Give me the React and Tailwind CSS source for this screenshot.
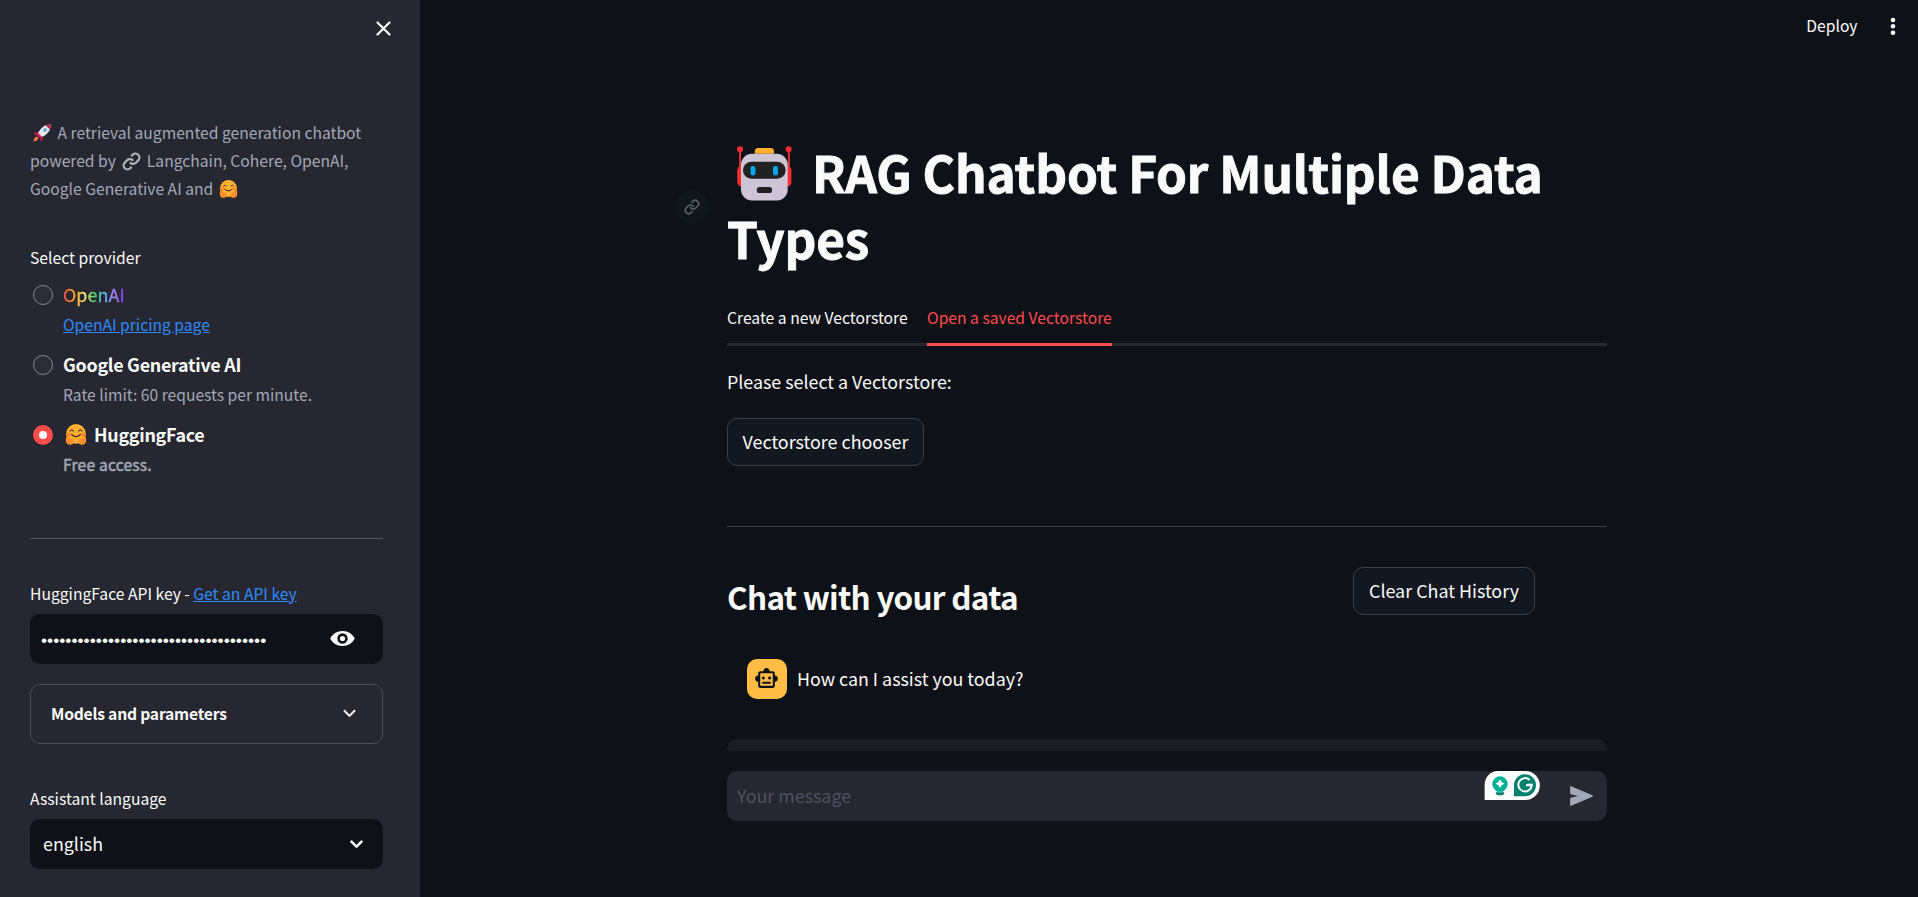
import React from "react";

const Rocket = ({ className }) => (
  <svg viewBox="0 0 18 18" className={className}>
    <path d="M5.5 8 2 8.6 1 11l4-.6zM10 12.5 9.4 16 7 17l.6-4z" fill="#c4134f" />
    <path d="M17.6.4C12 .2 8 3 5 9.2L8.8 13C15 10 17.8 6 17.6.4z" fill="#e9e6ee" />
    <path d="M17.6.4 12.6 1.2l4.2 4.2z" fill="#d1174f" />
    <path d="M5 9.2 8.8 13l-2 1.2-3-3z" fill="#d1174f" />
    <path d="M4 12.6c-2 .3-2.800 2-3.600 5 3-.8 4.700-1.600 5-3.600z" fill="#ff7d3c" />
    <circle cx="12" cy="6" r="1.900" fill="#6aa9dc" />
  </svg>
);

const ChainLink = ({ className }) => (
  <svg viewBox="0 0 24 24" fill="none" stroke="#b4b4b8" strokeWidth="2.800" className={className}>
    <path d="M10 13a5 5 0 0 0 7.540.540l3-3a5 5 0 0 0-7.070-7.070l-1.720 1.710" />
    <path d="M14 11a5 5 0 0 0-7.540-.540l-3 3a5 5 0 0 0 7.070 7.070l1.710-1.710" />
  </svg>
);

const Hug = ({ className }) => (
  <svg viewBox="0 0 20 19" className={className}>
    <ellipse cx="10" cy="9" rx="9" ry="9" fill="#ffb02e" />
    <circle cx="3.200" cy="9.500" r="1.800" fill="#ff822d" />
    <circle cx="16.800" cy="9.500" r="1.800" fill="#ff822d" />
    <path d="M4.600 6.400q1.500-2.400 3 0M12.400 6.400q1.500-2.400 3 0" fill="none" stroke="#402a32" strokeWidth="1" strokeLinecap="round" />
    <path d="M6 9.500q4 4 8 0" fill="none" stroke="#402a32" strokeWidth="1.100" strokeLinecap="round" />
    <path d="M.8 12.500q1-1.600 2.600-.6l3.400 1.700q1.700 1.200 1 3.600-.6 1.600-2.600 1.600H3.600Q.4 18.400.8 12.500z" fill="#ff8f2d" />
    <path d="M19.200 12.500q-1-1.600-2.600-.6l-3.400 1.700q-1.700 1.200-1 3.600.6 1.600 2.600 1.600h1.600q3.200-.4 2.800-6.300z" fill="#ff8f2d" />
  </svg>
);

const Robot = ({ className }) => (
  <svg viewBox="0 0 55 55" className={className}>
    <path d="M2.200 4h1.800v20H2.200zM51 4h1.800v20H51z" fill="#f92f2f" />
    <circle cx="3.100" cy="3.200" r="3" fill="#f92f2f" />
    <circle cx="51.600" cy="3.200" r="3" fill="#f92f2f" />
    <path d="M5 20C2 20 .3 22 .3 24v12c0 2.500 1.700 4.500 4.700 4.500zM49.700 20c3 0 4.700 2 4.700 4v12c0 2.500-1.700 4.500-4.700 4.500z" fill="#f92f2f" />
    <rect x="4" y="7.700" width="46.700" height="46.700" rx="11" fill="#cdc4d6" />
    <path d="M17.800 7.700V5.300c0-1.900 1.200-3.200 3-3.200h13.200c1.800 0 3 1.300 3 3.200v2.400z" fill="#ffb02e" />
    <rect x="6" y="15.800" width="42.600" height="17" rx="8.500" fill="#212121" />
    <rect x="13.500" y="20" width="5" height="9.500" rx="2.200" fill="#00a6ed" />
    <rect x="36" y="20" width="5" height="9.500" rx="2.200" fill="#00a6ed" />
    <rect x="19.800" y="41" width="15.200" height="6" rx="2.600" fill="#212121" />
  </svg>
);

const T = ({ className = "", children }) => (
  <span className={"whitespace-pre " + className}>{children}</span>
);

function Radio({ checked, label, caption }) {
  return (
    <div className="flex h-[70px] gap-[10px] pl-[3px]">
      <div className={checked ? "mt-[4px] flex size-[20px] shrink-0 items-center justify-center rounded-full bg-[#ff4b4b]" : "mt-[4px] size-[20px] shrink-0 rounded-full border border-[#85868c] bg-[#2b2c36]"}>
        {checked && <div className="size-[7.500px] rounded-full bg-[#fafafa]" />}
      </div>
      <div>
        <div className="-mt-px flex h-[28px] items-center text-[17.900px] leading-[28px]">{label}</div>
        <div className="mt-px flex h-[28px] items-center pt-[3px] text-[15.650px] leading-[28px] text-[#a3a8b8]">{caption}</div>
      </div>
    </div>
  );
}

export default function App() {
  return (
    <div className="flex h-[897px] w-full overflow-hidden bg-[#0e1117] font-['Noto_Sans_CJK_SC',sans-serif] text-[#fafafa]">
      <aside className="flex w-[420px] shrink-0 flex-col bg-[#262730] pr-[37px] pl-[30px]">
        <div className="-mr-[8px] flex h-[119px] justify-end pt-[21px]">
          <svg viewBox="0 0 15 15" className="size-[15px]" stroke="#fafafa" strokeWidth="2.200" strokeLinecap="round">
            <path d="M1.500 1.500 13.500 13.500M13.500 1.500 1.500 13.500" />
          </svg>
        </div>
        <div className="flex flex-col text-[15.670px] leading-[28px] text-[#a3a8b8]">
          <div className="flex items-center"><Rocket className="mr-[6.500px] ml-[3px] size-[18px]" /><T>A retrieval augmented generation chatbot</T></div>
          <div className="flex items-center"><T>powered by</T><ChainLink className="mr-[6px] ml-[6px] size-[19px]" /><T>Langchain, Cohere, OpenAI,</T></div>
          <div className="flex items-center"><T>Google Generative AI and</T><Hug className="ml-[6px] h-[18px] w-[19px]" /></div>
        </div>
        <div className="mt-[41px] text-[15.700px] leading-[28px]"><T>Select provider</T></div>
        <div className="mt-[9px]">
          <Radio
            label={<T className="bg-[linear-gradient(to_right,#ff4b4b,#ffa421_18%,#ffe870_34%,#3dd56d_52%,#60b4ff_68%,#a97eff_84%,#803df5)] bg-clip-text tracking-[0.100px] text-transparent [-webkit-text-stroke:0.300px_transparent]">OpenAI</T>}
            caption={<T className="text-[#2b8cff] underline">OpenAI pricing page</T>}
          />
          <Radio label={<T className="font-bold tracking-[-0.270px]">Google Generative AI</T>} caption={<T>Rate limit: 60 requests per minute.</T>} />
          <Radio checked label={<><Hug className="mr-[7px] ml-[2px] h-[21px] w-[22px]" /><T className="font-bold tracking-[-0.270px]">HuggingFace</T></>} caption={<T className="tracking-[0.180px] [-webkit-text-stroke:0.500px]">Free access.</T>} />
        </div>
        <div className="mt-[47px] h-px bg-[#53545c]" />
        <div className="mt-[41px] flex gap-[3.500px] text-[15.680px] leading-[28px]"><T>HuggingFace API key -</T><T className="text-[#2b8cff] underline">Get an API key</T></div>
        <div className="mt-[6px] flex h-[50px] shrink-0 items-center justify-between rounded-[10px] bg-[#0e1117] pt-px pr-[28px] pl-[11px]">
          <T className="mt-[2px] font-['Liberation_Sans',sans-serif] text-[17.400px]">{"•".repeat(37)}</T>
          <svg viewBox="0 0 25 15" className="-mt-[3px] h-[15px] w-[25px]"><path fillRule="evenodd" fill="#fafafa" d="M12.500 0C6.800 0 2.400 3 .2 7.500 2.400 12 6.800 15 12.500 15s10.100-3 12.300-7.500C22.600 3 18.200 0 12.500 0zM12.500 12.700a5.200 5.200 0 1 1 0-10.400 5.200 5.200 0 0 1 0 10.400z" /><circle cx="12.500" cy="7.500" r="2.600" fill="#fafafa" /></svg>
        </div>
        <div className="mt-[20px] flex h-[60px] shrink-0 items-center justify-between rounded-[10px] border border-[#4b4c55] pr-[26px] pl-[20px]">
          <T className="text-[15.650px] leading-[28px] font-bold tracking-[-0.200px]">Models and parameters</T>
          <svg viewBox="0 0 13 9" className="-mt-[2px] h-[9px] w-[13px]" fill="none" stroke="#fafafa" strokeWidth="2"><path d="m.9 1.200 5.600 5.700 5.600-5.700" /></svg>
        </div>
        <div className="mt-[41px] text-[15.680px] leading-[28px]"><T>Assistant language</T></div>
        <div className="mt-[6px] flex h-[50px] shrink-0 items-center justify-between rounded-[10px] bg-[#0e1117] pr-[20px] pl-[13px]">
          <T className="-mt-[2px] text-[17.850px] leading-[28px]">english</T>
          <svg viewBox="0 0 13 9" className="h-[9px] w-[13px]" fill="none" stroke="#fafafa" strokeWidth="2.600" strokeLinecap="round" strokeLinejoin="round"><path d="m1.500 1.700 5 5 5-5" /></svg>
        </div>
      </aside>

      <main className="flex flex-1 flex-col">
        <header className="flex h-[57px] shrink-0 items-start justify-end gap-[32px] pr-[22.500px] text-[15.650px] leading-[28px]">
          <T className="mt-[12px]">Deploy</T>
          <svg viewBox="0 0 6 18" className="mt-[17px] h-[18px] w-[6px]" fill="#fafafa"><circle cx="3" cy="3" r="2.300" /><circle cx="3" cy="9.300" r="2.300" /><circle cx="3" cy="15.700" r="2.300" /></svg>
        </header>
        <div className="ml-[307px] flex w-[880px] flex-col">
          <h1 className="relative mt-[82px] text-[49.500px] leading-[66px] font-bold tracking-[-0.160px] [-webkit-text-stroke:0.900px]">
            <span className="absolute top-[51px] left-[-52px] flex size-[34px] items-center justify-center rounded-full bg-[#11161d]">
              <svg viewBox="0 0 24 24" className="size-[16px]" fill="none" stroke="#5d6067" strokeWidth="2.400" strokeLinecap="round" strokeLinejoin="round">
                <path d="M10 13a5 5 0 0 0 7.540.540l3-3a5 5 0 0 0-7.070-7.070l-1.720 1.710" />
                <path d="M14 11a5 5 0 0 0-7.540-.540l-3 3a5 5 0 0 0 7.070 7.070l1.710-1.710" />
              </svg>
            </span>
            <span className="flex h-[66px] items-center"><Robot className="mt-[3px] mr-[20px] ml-[10px] size-[55px]" /><T>RAG Chatbot For Multiple Data</T></span>
            <span className="block h-[66px]"><T>Types</T></span>
          </h1>
          <div className="mt-[33px] flex h-[42px] gap-[20px] border-b-[3px] border-[#262a30] text-[15.680px] leading-[28px]">
            <T className="w-[180px]">Create a new Vectorstore</T>
            <div className="h-[42px] border-b-[3px] border-[#ff4b4b] text-[#ff4b4b]"><T>Open a saved Vectorstore</T></div>
          </div>
          <div className="mt-[19px] text-[17.850px] leading-[32px]"><T>Please select a Vectorstore:</T></div>
          <div className="mt-[21px] flex h-[48px] w-[197px] items-center justify-center rounded-[10px] border border-[#3c3f45] bg-[#131720] text-[17.900px]"><T className="-mt-[2px]">Vectorstore chooser</T></div>
          <div className="mt-[60px] h-px bg-[#3e4146]" />
          <div className="flex justify-between pt-[40px] pr-[72px]">
            <h2 className="mt-[8px] text-[31.500px] leading-[42px] font-bold tracking-[-0.720px]"><T>Chat with your data</T></h2>
            <div className="flex h-[48px] w-[182px] items-center justify-center rounded-[10px] border border-[#3c3f45] bg-[#131720] text-[17.900px]"><T className="-mt-[2px]">Clear Chat History</T></div>
          </div>
          <div className="mt-[42px] flex h-[40px] items-center gap-[10px] pl-[20px]">
            <div className="flex size-[40px] items-center justify-center rounded-[10px] bg-[#ffbd45]">
              <svg viewBox="0 0 24 24" className="-mt-px -ml-px size-[25px]" fill="#0e1117"><path d="M20 9V7c0-1.100-.9-2-2-2h-3c0-1.660-1.340-3-3-3S9 3.340 9 5H6c-1.100 0-2 .9-2 2v2c-1.660 0-3 1.340-3 3s1.340 3 3 3v4c0 1.100.9 2 2 2h12c1.100 0 2-.9 2-2v-4c1.660 0 3-1.340 3-3s-1.340-3-3-3zm-2 10H6V7h12v12zm-9-6c-.83 0-1.500-.67-1.500-1.500S8.170 10 9 10s1.500.67 1.500 1.500S9.830 13 9 13zm7.500-1.500c0 .83-.67 1.500-1.500 1.500s-1.500-.67-1.500-1.500.67-1.500 1.500-1.500 1.500.67 1.500 1.500zM8 15h8v2H8v-2z" /></svg>
            </div>
            <T className="-mt-[2px] text-[17.850px] leading-[32px]">How can I assist you today?</T>
          </div>
          <div className="mt-[40px] h-[12px] rounded-t-[10px] bg-[#1a1c24]" />
          <div className="relative mt-[20px] flex h-[50px] items-center justify-between rounded-[10px] bg-[#262730] pr-[14px] pl-[10px]">
            <T className="-mt-[2px] text-[17.850px] leading-[32px] text-[#4f5162]">Your message</T>
            <svg viewBox="0 0 69 60" className="h-[20px] w-[23px]" fill="#a3a8b8" stroke="#a3a8b8" strokeWidth="5" strokeLinejoin="round"><path d="M3 3 66 30 3 57V38l30-8L3 22z" /></svg>
            <svg viewBox="0 0 168 87" className="absolute top-0 right-[67px] h-[29px] w-[56px]">
              <path d="M2 87V40A40 40 0 0 1 42 0h82a43.500 43.500 0 0 1 0 87z" fill="#fff" />
              <circle cx="48" cy="39" r="23" fill="#00b295" /><path d="M38 56h20v6H38z" fill="#00b295" />
              <path d="M35 64h26c0 6-4 9-8 9H43c-4 0-8-3-8-9z" fill="#05806d" />
              <path d="M48 25q3 10 13 13-10 3-13 13-3-10-13-13 10-3 13-13z" fill="#fff" />
              <path d="M90 76V43a33 33 0 1 1 33 33z" fill="#05806d" />
              <path d="M137 27a20 20 0 1 0 6 16h-17" fill="none" stroke="#fff" strokeWidth="6" /><path d="M131 41h15" stroke="#fff" strokeWidth="6" />
            </svg>
          </div>
        </div>
      </main>
    </div>
  );
}
